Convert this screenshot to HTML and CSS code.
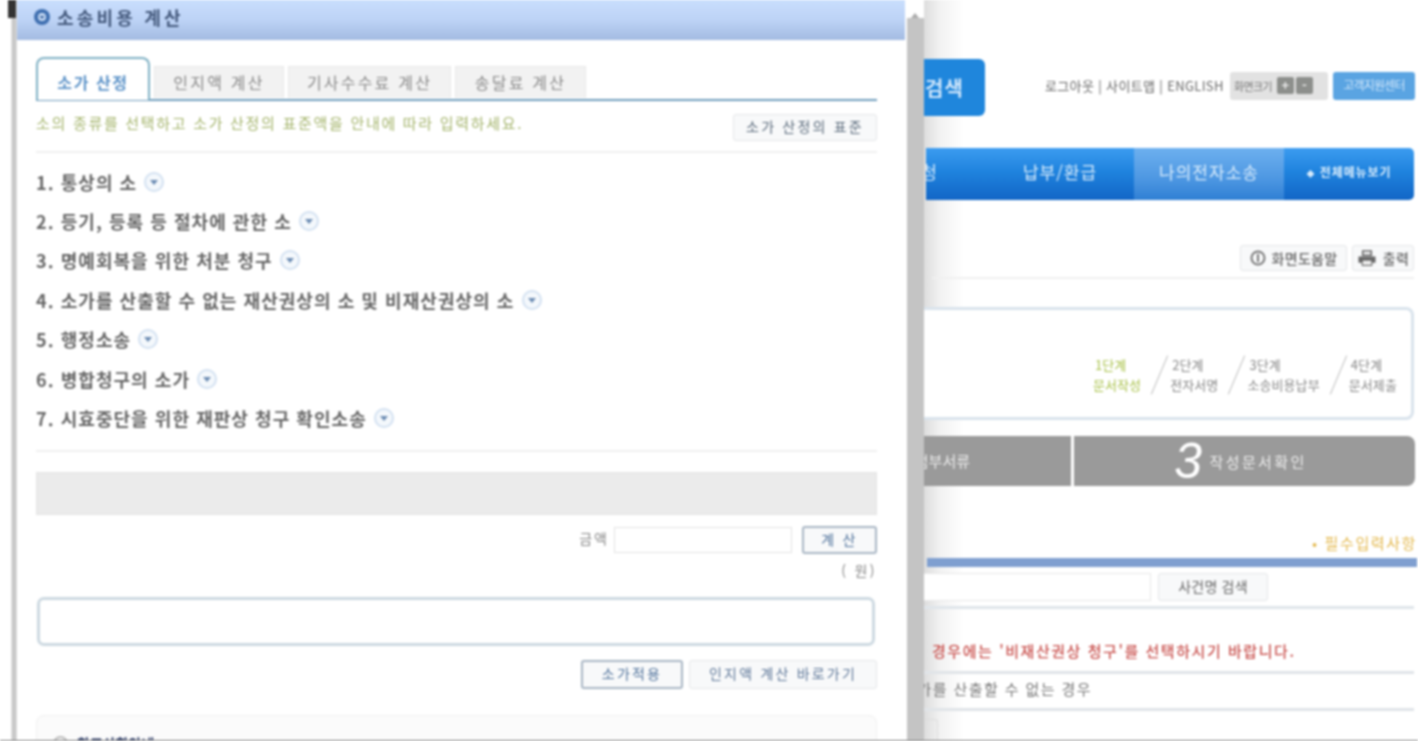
FILE: index.html
```html
<!DOCTYPE html>
<html lang="ko">

<head>
  <meta charset="utf-8">
  <title>소송비용 계산</title>
  <link rel="stylesheet" href="styles.css">
</head>

<body>
  <div class="screen">
    <div class="edge"><span class="edge-mark"></span></div>

    <div class="popup">
      <div class="popup-title">
        <svg class="title-icon" width="18" height="18" viewBox="0 0 18 18">
          <circle cx="9" cy="9" r="8" fill="#3f6fb0"/>
          <circle cx="9" cy="9" r="4" fill="#c9dcf5"/>
          <path d="M6.5 8l2.5 3 2.5-3z" fill="#2f5b98"/>
        </svg>
        소송비용 계산
      </div>
      <div class="popup-body">
        <div class="tabs">
          <div class="tab active">소가 산정</div>
          <div class="tab tab-1">인지액 계산</div>
          <div class="tab tab-2">기사수수료 계산</div>
          <div class="tab tab-3">송달료 계산</div>
        </div>
        <div class="guide">
          <span class="guide-text">소의 종류를 선택하고 소가 산정의 표준액을 안내에 따라 입력하세요.</span>
          <button class="btn btn-guide">소가 산정의 표준</button>
        </div>
        <ol class="suit-list">
          <li>1. 통상의 소 <i class="drop"></i></li>
          <li>2. 등기, 등록 등 절차에 관한 소 <i class="drop"></i></li>
          <li>3. 명예회복을 위한 처분 청구 <i class="drop"></i></li>
          <li>4. 소가를 산출할 수 없는 재산권상의 소 및 비재산권상의 소 <i class="drop"></i></li>
          <li>5. 행정소송 <i class="drop"></i></li>
          <li>6. 병합청구의 소가 <i class="drop"></i></li>
          <li>7. 시효중단을 위한 재판상 청구 확인소송 <i class="drop"></i></li>
        </ol>
        <div class="gray-box"></div>
        <div class="amount-row">
          <label class="amount-label">금액</label>
          <input class="amount-input" type="text">
          <button class="btn btn-strong btn-calc">계 산</button>
        </div>
        <div class="won">( 원)</div>
        <div class="result-box"></div>
        <div class="action-row">
          <button class="btn btn-strong btn-apply">소가적용</button>
          <button class="btn btn-go">인지액 계산 바로가기</button>
        </div>
        <div class="note-box">
          <span class="note-dot"></span>
          <span class="note-title">참고사항안내</span>
        </div>
      </div>
    </div>

    <div class="scrollbar">
      <div class="scroll-arrow"></div>
      <div class="scroll-thumb"></div>
    </div>

    <div class="page">
      <div class="top-row">
        <div class="search-btn">검색</div>
        <div class="top-links">로그아웃 | 사이트맵 | ENGLISH</div>
        <div class="zoom-box">화면크기 <b>+</b><b>-</b></div>
        <div class="help-center">고객지원센터</div>
      </div>
      <div class="nav">
        <div class="nav-item nav-first">신청</div>
        <div class="nav-item nav-pay">납부/환급</div>
        <div class="nav-item nav-mine">나의전자소송</div>
        <div class="nav-item nav-all"><span class="diamond">◆</span> 전체메뉴보기</div>
      </div>
      <div class="tool-row">
        <button class="btn btn-tool btn-help">
          <svg width="16" height="16" viewBox="0 0 16 16"><circle cx="8" cy="8" r="6.5" fill="none" stroke="#777" stroke-width="2"/><path d="M8 4v8" stroke="#777" stroke-width="2"/></svg>
          화면도움말
        </button>
        <button class="btn btn-tool btn-print">
          <svg width="20" height="17" viewBox="0 0 18 16"><path d="M5 1h8v4H5z" fill="none" stroke="#666" stroke-width="1.5"/><path d="M1 6h16v6h-3v3H4v-3H1z" fill="#666"/><path d="M5 10h8v4H5z" fill="#eee"/></svg>
          출력
        </button>
      </div>
      <div class="steps">
        <div class="step on">1단계<br>문서작성</div>
        <span class="slash"></span>
        <div class="step">2단계<br>전자서명</div>
        <span class="slash"></span>
        <div class="step">3단계<br>소송비용납부</div>
        <span class="slash"></span>
        <div class="step">4단계<br>문서제출</div>
      </div>
      <div class="stage">
        <div class="stage-prev">첨부서류</div>
        <div class="stage-now"><em>3</em>작성문서확인</div>
      </div>
      <div class="required">• 필수입력사항</div>
      <div class="blue-bar"></div>
      <div class="case-row">
        <input class="case-input" type="text">
        <button class="btn btn-case">사건명 검색</button>
      </div>
      <div class="red-note">경우에는 '비재산권상 청구'를 선택하시기 바랍니다.</div>
      <div class="plain-note">소가를 산출할 수 없는 경우</div>
      <div class="cut-row"><span class="cut-input"></span></div>
    </div>
  </div>
</body>

</html>
```

FILE: styles.css
```css
* {
  box-sizing: border-box;
}

html,
body {
  margin: 0;
  height: 741px;
  overflow: hidden;
  background: #fff;
}

body {
  font-family: "Noto Sans CJK KR", "Noto Sans", sans-serif;
  color: #555;
}

button {
  font-family: inherit;
}

.screen {
  display: flex;
  height: 741px;
  border-bottom: 1px solid #777;
  overflow: hidden;
  filter: blur(0.9px);
}

/* left edge of the window behind */
.edge {
  width: 17px;
  flex: none;
  background: linear-gradient(90deg, #fff 0, #fff 11px, #c8c8c8 12px, #c8c8c8 16px, #eee 17px);
}

.edge-mark {
  display: block;
  width: 8px;
  height: 18px;
  margin-left: 8px;
  background: #333;
}

/* popup */
.popup {
  width: 890px;
  flex: none;
  background: #fff;
}

.popup-title {
  display: flex;
  align-items: center;
  gap: 6px;
  height: 40px;
  padding: 0 0 6px 16px;
  margin-right: 2px;
  font-size: 18px;
  font-weight: 700;
  color: #44597c;
  letter-spacing: 3.2px;
  background: linear-gradient(180deg, #c9defd 0, #bdd3f6 50%, #a3bbe2 100%);
}

.popup-body {
  width: 860px;
  padding: 18px 0 0 19px;
}

.tabs {
  display: flex;
  align-items: flex-end;
  gap: 4px;
  height: 43px;
  border-bottom: 2px solid #6f9dbd;
}

.tab {
  height: 32px;
  margin-bottom: 1px;
  padding-top: 3px;
  text-align: center;
  font-size: 16px;
  letter-spacing: 2.2px;
  color: #8a8a8a;
  background: #f2f2f2;
  border: 1px solid #e8e8e8;
  border-bottom: 0;
}

.tab.active {
  width: 114px;
  height: 43px;
  margin-bottom: -1px;
  padding-top: 11px;
  font-weight: 700;
  letter-spacing: 1.6px;
  color: #5d93c8;
  background: #fff;
  border: 2px solid #7fb0c4;
  border-bottom: 0;
  border-radius: 8px 8px 0 0;
}

.tab-1 {
  width: 130px;
}

.tab-2 {
  width: 163px;
}

.tab-3 {
  width: 131px;
}

.guide {
  display: flex;
  justify-content: space-between;
  height: 52px;
  padding-top: 13px;
  border-bottom: 2px solid #f0f0f0;
}

.guide-text {
  font-size: 15px;
  line-height: 18px;
  color: #a5b56d;
  letter-spacing: 1.7px;
  white-space: nowrap;
}

.btn {
  border: 1px solid #e4e6e8;
  border-radius: 3px;
  background: #f8f9fa;
  color: #5b6b7c;
  font-size: 14px;
  letter-spacing: 2.2px;
  padding: 0 0 3px;
}

.btn-guide {
  width: 144px;
  height: 27px;
  flex: none;
}

.btn-strong {
  border: 2px solid #a9b6c4;
  color: #51739c;
}

.suit-list {
  list-style: none;
  margin: 0;
  padding: 9px 0 0;
  border-bottom: 2px solid #f0f0f0;
  height: 299px;
}

.suit-list li {
  display: flex;
  align-items: center;
  gap: 1px;
  height: 39.4px;
  font-size: 18px;
  font-weight: 700;
  letter-spacing: 1.05px;
  color: #666;
  white-space: pre;
}

.drop {
  display: block;
  width: 20px;
  height: 20px;
  border-radius: 50%;
  border: 2px solid #d3e1f1;
  background: #f4f8fc;
  position: relative;
}

.drop::after {
  content: "";
  position: absolute;
  left: 4px;
  top: 6px;
  border: 4px solid transparent;
  border-top: 5px solid #6c8cb3;
}

.gray-box {
  height: 43px;
  margin-top: 20px;
  background: #ebebeb;
  border: 1px solid #e4e4e4;
}

.amount-row {
  display: flex;
  justify-content: flex-end;
  align-items: center;
  height: 28px;
  margin-top: 11px;
}

.amount-label {
  padding-bottom: 5px;
  font-size: 14px;
  letter-spacing: 2px;
  color: #888;
  margin-right: 5px;
}

.amount-input {
  width: 178px;
  height: 26px;
  margin-right: 10px;
  border: 1px solid #e2e2e2;
  background: #fff;
}

.btn-calc {
  width: 75px;
  height: 28px;
}

.won {
  height: 34px;
  padding-top: 6px;
  text-align: right;
  font-size: 14px;
  letter-spacing: 2.4px;
  color: #888;
}

.result-box {
  width: 838px;
  height: 49px;
  margin-left: 1px;
  margin-top: 9px;
  border: 3px solid #cdd9e1;
  border-radius: 7px;
}

.action-row {
  display: flex;
  justify-content: flex-end;
  gap: 6px;
  margin-top: 14px;
}

.btn-apply {
  width: 102px;
  height: 29px;
}

.btn-go {
  width: 188px;
  height: 29px;
  color: #60799a;
}

.note-box {
  display: flex;
  align-items: flex-start;
  gap: 9px;
  height: 60px;
  margin-top: 26px;
  padding: 18px 0 0 16px;
  background: #fbfbfb;
  border: 1px solid #f0f0f0;
  border-radius: 8px 8px 0 0;
}

.note-dot {
  width: 15px;
  height: 15px;
  margin-top: 2px;
  border: 2px solid #bbb;
  border-radius: 50%;
}

.note-title {
  font-size: 14px;
  line-height: 18px;
  font-weight: 700;
  color: #2b3a66;
}

/* scrollbar of the popup */
.scrollbar {
  width: 17px;
  flex: none;
  background: #fff;
}

.scroll-arrow {
  width: 0;
  height: 18px;
  margin-left: 4px;
  border: 4px solid transparent;
  border-bottom: 5px solid #aaa;
  border-top-width: 3px;
}

.scroll-thumb {
  height: 723px;
  background: #c4c4c4;
}

/* page behind the popup */
.page {
  flex: 1;
  min-width: 0;
  overflow: hidden;
  padding-top: 58px;
  background: linear-gradient(90deg, #ddd 0, #f2f2f2 16px, #fff 40px);
}

.top-row {
  display: flex;
  align-items: center;
  height: 58px;
}

.search-btn {
  width: 61px;
  height: 57px;
  flex: none;
  padding: 14px 0 0 1px;
  font-size: 20px;
  font-weight: 700;
  letter-spacing: 1px;
  color: #cfe6fb;
  background: #1f86dc;
  border-radius: 0 6px 6px 0;
}

.top-links {
  width: 180px;
  flex: none;
  margin-left: 60px;
  margin-top: -3px;
  font-size: 13px;
  letter-spacing: 0.35px;
  white-space: nowrap;
  color: #666;
}

.zoom-box {
  display: flex;
  align-items: center;
  gap: 2px;
  width: 98px;
  flex: none;
  height: 28px;
  margin-left: 5px;
  margin-top: -3px;
  padding-left: 4px;
  font-size: 11px;
  letter-spacing: -0.6px;
  white-space: pre;
  color: #777;
  background: #e2e2e2;
  border-radius: 3px;
}

.zoom-box b {
  width: 17px;
  height: 17px;
  text-align: center;
  line-height: 16px;
  font-size: 13px;
  color: #eee;
  background: #8d8f8c;
  border-radius: 2px;
}

.help-center {
  width: 82px;
  flex: none;
  height: 28px;
  margin-left: 5px;
  margin-top: -3px;
  text-align: center;
  line-height: 26px;
  font-size: 12px;
  letter-spacing: -0.8px;
  white-space: nowrap;
  color: #d3e8fb;
  background: #5aa4e2;
  border-radius: 3px;
}

.nav {
  display: flex;
  width: 488px;
  height: 52px;
  margin: 32px 0 0 2px;
  background: linear-gradient(180deg, #3c9cf0 0, #1f83de 45%, #1266c6 100%);
  border-radius: 0 5px 5px 0;
  color: #d9ecfc;
}

.nav-item {
  text-align: center;
  line-height: 48px;
  font-size: 17px;
  letter-spacing: 1px;
}

.nav-first {
  width: 12px;
  direction: rtl;
  overflow: hidden;
  white-space: nowrap;
}

.nav-pay {
  width: 196px;
  padding-left: 48px;
}

.nav-mine {
  width: 150px;
  background: linear-gradient(180deg, #6db0ef 0, #4d97e2 60%, #2f7fd4 100%);
}

.nav-all {
  width: 130px;
  font-size: 12px;
  font-weight: 700;
  letter-spacing: 0.9px;
}

.diamond {
  font-size: 8px;
}

.tool-row {
  display: flex;
  justify-content: flex-end;
  gap: 5px;
  height: 34px;
  margin-top: 45px;
  padding: 0 0 7px;
  border-bottom: 2px solid #f0f0f0;
  margin-left: 8px;
  margin-right: 4px;
}

.btn-tool {
  display: flex;
  align-items: center;
  justify-content: center;
  gap: 6px;
  height: 26px;
  padding: 0;
  font-size: 14px;
  font-weight: 500;
  color: #666;
  letter-spacing: 0.3px;
}

.btn-help {
  width: 107px;
}

.btn-print {
  width: 62px;
}

.steps {
  display: flex;
  justify-content: flex-end;
  align-items: center;
  width: 490px;
  height: 113px;
  margin-top: 28px;
  padding: 22px 14px 0 0;
  background: #fff;
  border: 3px solid #d9e3ec;
  border-left: 0;
  border-radius: 0 8px 8px 0;
}

.step {
  text-indent: 2px;
  font-size: 13px;
  line-height: 20px;
  letter-spacing: 0.1px;
  white-space: nowrap;
  color: #888;
}

.step.on {
  color: #a9c24a;
}

.slash {
  width: 1px;
  height: 42px;
  margin: 0 10px 0 18px;
  background: #bbb;
  transform: rotate(23deg);
}

.stage {
  display: flex;
  gap: 3px;
  width: 491px;
  height: 50px;
  margin-top: 16px;
  color: #eee;
}

.stage-prev {
  width: 147px;
  padding-right: 101px;
  text-align: right;
  line-height: 50px;
  font-size: 15px;
  white-space: nowrap;
  direction: rtl;
  background: #9a9a9a;
}

.stage-now {
  display: flex;
  align-items: center;
  justify-content: center;
  flex: 1;
  padding-right: 8px;
  font-size: 15px;
  letter-spacing: 2.4px;
  background: #9a9a9a;
  border-radius: 0 8px 8px 0;
}

.stage-now em {
  margin-right: 5px;
  font: italic 400 50px "Liberation Sans", sans-serif;
  color: #fff;
}

.required {
  height: 25px;
  margin-top: 46px;
  padding-right: 1px;
  text-align: right;
  font-size: 15px;
  line-height: 22px;
  letter-spacing: 1.6px;
  color: #e4b94f;
}

.blue-bar {
  width: 490px;
  height: 9px;
  margin-top: 1px;
  margin-left: 3px;
  background: #7f9fd0;
}

.case-row {
  display: flex;
  gap: 7px;
  height: 42px;
  padding-top: 6px;
  width: 490px;
  border-bottom: 3px solid #dfe5ea;
}

.case-input {
  width: 227px;
  height: 28px;
  border: 1px solid #e8e8e8;
  border-left: 0;
  background: #fff;
}

.btn-case {
  width: 110px;
  height: 28px;
  font-size: 14px;
  color: #666;
  letter-spacing: 0.2px;
}

.red-note {
  height: 65px;
  padding: 31px 0 0 8px;
  width: 490px;
  border-bottom: 3px solid #e0e4e8;
  font-size: 15px;
  line-height: 22px;
  font-weight: 500;
  letter-spacing: 1.55px;
  white-space: nowrap;
  color: #c9524f;
}

.plain-note {
  display: flex;
  justify-content: flex-end;
  width: 168px;
  height: 35px;
  padding-top: 4px;
  font-size: 15px;
  line-height: 22px;
  letter-spacing: 1.4px;
  white-space: nowrap;
  color: #777;
}

.cut-row {
  display: block;
  width: 490px;
  height: 32px;
  padding-top: 8px;
  border-top: 3px solid #e0e4e8;
  margin-top: -1px;
}

.cut-input {
  display: block;
  width: 14px;
  height: 30px;
  border: 1px solid #ddd;
  border-left: 0;
  border-radius: 0 3px 0 0;
}
```
